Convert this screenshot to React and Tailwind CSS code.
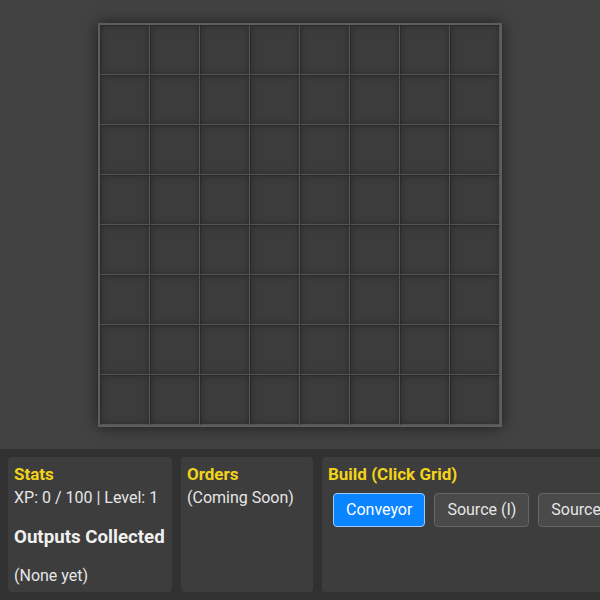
import React from "react";

const SIZE = 8;

function Cell() {
  return (
    <div className="w-[50px] h-[50px] bg-[#3c3c3c] border-l border-t border-l-[#2a2a2a] border-t-[#2a2a2a] border-r border-b border-r-[#555] border-b-[#555] shadow-[inset_0_0_6px_rgba(0,0,0,0.3)]" />
  );
}

function Board() {
  const cells = Array.from({ length: SIZE * SIZE });
  return (
    <div className="border-2 border-[#5e5e5e] shadow-[0_0_14px_rgba(0,0,0,0.55)] bg-[#383838]">
      <div className="grid grid-cols-[repeat(8,50px)]">
        {cells.map((_, i) => (
          <Cell key={i} />
        ))}
      </div>
    </div>
  );
}

function Panel({ className = "", children }) {
  return (
    <div className={`bg-[#3d3d3d] rounded-[4px] px-[6px] pt-[6px] shrink-0 ${className}`}>
      {children}
    </div>
  );
}

function Title({ children }) {
  return <div className="text-[#f3d31a] font-bold text-[17px] leading-[22px]">{children}</div>;
}

export default function App() {
  return (
    <div className="w-[600px] h-[600px] flex flex-col bg-[#424242] overflow-hidden font-['Roboto',sans-serif] text-[#e6e6e6]">
      <div className="h-[449px] flex items-center justify-center shrink-0">
        <Board />
      </div>
      <div className="flex-1 bg-[#313131] flex gap-[9px] px-[8px] py-[8px] overflow-hidden">
        <Panel className="w-[164px]">
          <Title>Stats</Title>
          <div className="text-[16px] leading-[22px] mt-[2px] whitespace-nowrap">XP: 0 / 100 | Level: 1</div>
          <div className="font-bold text-[18.7px] leading-[24px] mt-[16px] text-[#f0f0f0] whitespace-nowrap">Outputs Collected</div>
          <div className="text-[16px] leading-[22px] mt-[16px]">(None yet)</div>
        </Panel>
        <Panel className="w-[132px]">
          <Title>Orders</Title>
          <div className="text-[16px] leading-[22px] mt-[2px] whitespace-nowrap">(Coming Soon)</div>
        </Panel>
        <Panel className="w-[300px]">
          <Title>Build (Click Grid)</Title>
          <div className="flex gap-[9px] mt-[8px] pl-[5px]">
            <button className="h-[34px] px-[12px] rounded-[4px] bg-[#0a84ff] border border-[#9ccaff] text-white text-[16px] whitespace-nowrap">
              Conveyor
            </button>
            <button className="h-[34px] px-[12px] rounded-[4px] bg-[#4a4a4a] border border-[#666] text-[#e6e6e6] text-[16px] whitespace-nowrap">
              Source (I)
            </button>
            <button className="h-[34px] px-[12px] rounded-[4px] bg-[#4a4a4a] border border-[#666] text-[#e6e6e6] text-[16px] whitespace-nowrap">
              Source (O)
            </button>
          </div>
        </Panel>
      </div>
    </div>
  );
}
